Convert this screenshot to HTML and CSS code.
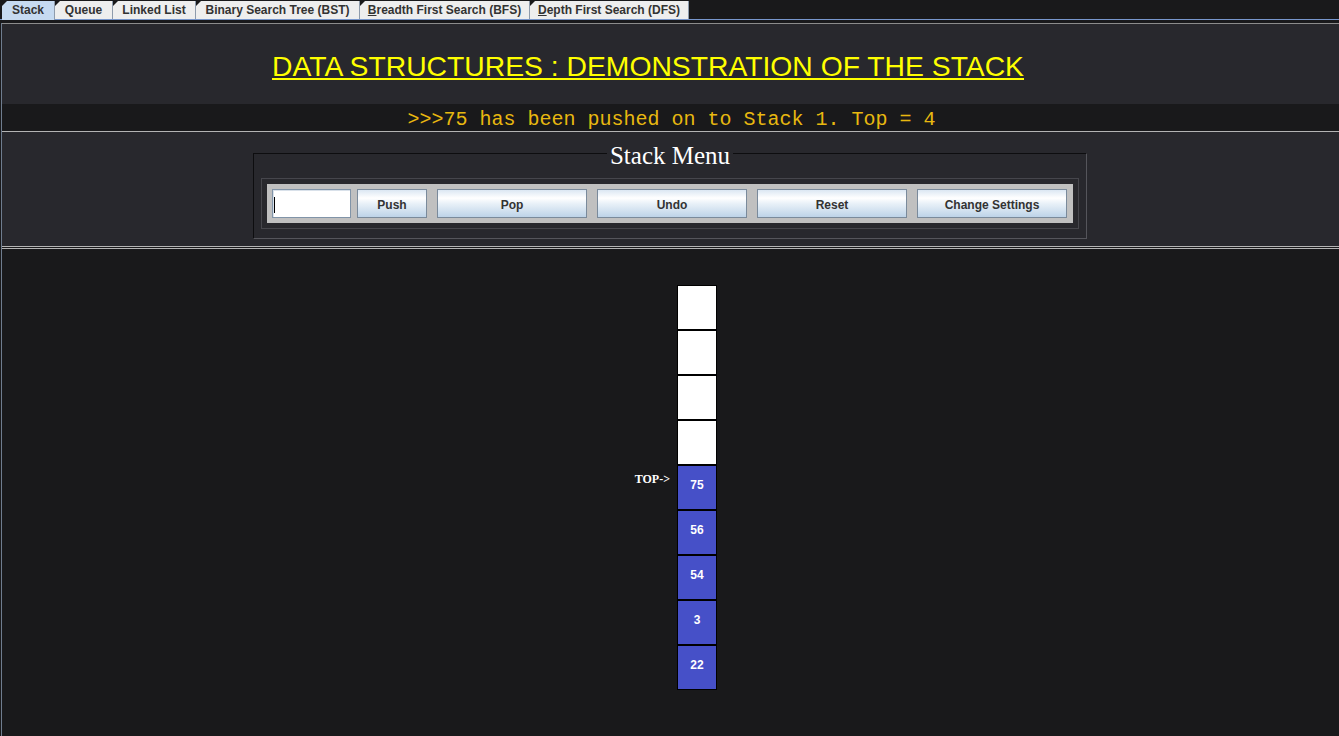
FILE: index.html
```html
<!DOCTYPE html>
<html>
<head>
<meta charset="utf-8">
<link rel="stylesheet" href="styles.css">
</head>
<body>
<div class="tabbar">
  <div class="tab t-stack selected">Stack</div>
  <div class="tab t-queue">Queue</div>
  <div class="tab t-list">Linked List</div>
  <div class="tab t-bst">Binary Search Tree (BST)</div>
  <div class="tab t-bfs"><u>B</u>readth First Search (BFS)</div>
  <div class="tab t-dfs"><u>D</u>epth First Search (DFS)</div>
</div>
<div class="content">
  <div class="header">
    <h1 class="title">DATA STRUCTURES : DEMONSTRATION OF THE STACK</h1>
  </div>
  <div class="status">&gt;&gt;&gt;75 has been pushed on to Stack 1. Top = 4</div>
  <div class="menu">
    <fieldset class="menubox">
      <legend class="menutitle">Stack Menu</legend>
      <div class="inner">
        <div class="controls">
          <div class="field"><span class="caret"></span></div>
          <div class="btn push">Push</div>
          <div class="btn wide">Pop</div>
          <div class="btn wide">Undo</div>
          <div class="btn wide">Reset</div>
          <div class="btn wide">Change Settings</div>
        </div>
      </div>
    </fieldset>
  </div>
  <div class="canvas">
    <div class="stack">
      <div class="row"><div class="label"></div><div class="cell"></div></div>
      <div class="row"><div class="label"></div><div class="cell"></div></div>
      <div class="row"><div class="label"></div><div class="cell"></div></div>
      <div class="row"><div class="label"></div><div class="cell"></div></div>
      <div class="row"><div class="label">TOP-&gt;</div><div class="cell filled">75</div></div>
      <div class="row"><div class="label"></div><div class="cell filled">56</div></div>
      <div class="row"><div class="label"></div><div class="cell filled">54</div></div>
      <div class="row"><div class="label"></div><div class="cell filled">3</div></div>
      <div class="row"><div class="label"></div><div class="cell filled">22</div></div>
    </div>
  </div>
</div>
</body>
</html>
```
FILE: styles.css
```css
html, body {
  margin: 0;
  padding: 0;
  background: #19191b;
  height: 100%;
  overflow: hidden;
}
body {
  font-family: "Liberation Sans", Arial, sans-serif;
}
.tabbar {
  display: flex;
  height: 19px;
  padding-left: 2px;
  border-bottom: 1px solid #7796cc;
  box-sizing: content-box;
}
.tab {
  margin-top: 1px;
  height: 18px;
  line-height: 18px;
  box-sizing: border-box;
  border-right: 1px solid #8e9bac;
  background: #eeeeee;
  color: #333333;
  font-size: 12px;
  font-weight: bold;
  text-align: center;
  white-space: nowrap;
  flex: none;
  clip-path: polygon(5px 0, 100% 0, 100% 100%, 0 100%, 0 5px);
}
.t-stack { width: 53px; }
.t-queue { width: 58px; }
.t-list { width: 83px; }
.t-bst { width: 164px; }
.t-bfs { width: 170px; }
.t-dfs { width: 159px; }
.tab.selected {
  background: #c6daf1;
  height: 19px;
  margin-bottom: -1px;
  position: relative;
  z-index: 1;
}
.content {
  margin-top: 3px;
  margin-left: 1px;
  border-left: 1px solid #6f7d8f;
}
.header {
  background: #28282d;
  border-top: 1px solid #8c8c8c;
  height: 80px;
  box-sizing: content-box;
}
.title {
  margin: 0;
  padding-top: 26px;
  padding-right: 45px;
  text-align: center;
  font-family: "Liberation Sans", Arial, sans-serif;
  font-weight: normal;
  font-size: 28.3px;
  line-height: 32px;
  color: #ffff00;
  text-decoration: underline;
  text-decoration-thickness: 2px;
  text-underline-offset: 2px;
}
.status {
  height: 27px;
  line-height: 31px;
  text-align: center;
  font-family: "Liberation Mono", "Courier New", monospace;
  font-size: 20px;
  color: #e8b810;
  padding-left: 2px;
}
.menu {
  background: #28282d;
  border-top: 1px solid #b4b4b4;
  border-bottom: 1px solid #b4b4b4;
  height: 114px;
  box-sizing: content-box;
  display: flex;
  justify-content: center;
  padding-right: 1px;
}
.menubox {
  margin: 5px 0 0 0;
  width: 834px;
  height: 102px;
  box-sizing: border-box;
  padding: 0 7px 0 7px;
  border-top: 1px solid #0d0d0f;
  border-left: 1px solid #0d0d0f;
  border-right: 1px solid #55555b;
  border-bottom: 1px solid #55555b;
  min-width: 0;
}
.menutitle {
  margin: 0 auto;
  padding: 6px 3px 0 3px;
  font-family: "Liberation Serif", "Times New Roman", serif;
  font-size: 25px;
  line-height: 26px;
  color: #ffffff;
}
.inner {
  margin-top: 9px;
  border: 1px solid #46464c;
  padding: 5px;
}
.controls {
  background: #c0c0c0;
  display: flex;
  padding: 5px;
}
.field {
  width: 79px;
  height: 29px;
  box-sizing: border-box;
  background: #ffffff;
  border: 1px solid #8194a8;
  box-shadow: inset 1px 1px 0 #d9e1ea;
  margin-right: 6px;
  padding: 7px 0 0 1px;
}
.caret {
  display: block;
  width: 1px;
  height: 16px;
  background: #000000;
}
.btn {
  height: 29px;
  box-sizing: border-box;
  border: 1px solid #7a8a9b;
  background: linear-gradient(#dbe7f3 0%, #ffffff 30%, #e9f1f8 50%, #bdd3e8 100%);
  color: #333333;
  font-size: 12px;
  font-weight: bold;
  line-height: 30px;
  text-align: center;
  white-space: nowrap;
}
.push {
  width: 70px;
}
.wide {
  width: 150px;
  margin-left: 10px;
}
.canvas {
  border-top: 1px solid #b4b4b4;
  margin-top: 1px;
  height: 500px;
}
.stack {
  padding-top: 36px;
  padding-left: 628px;
}
.row {
  display: flex;
  gap: 7px;
}
.label {
  width: 40px;
  text-align: right;
  padding-top: 7px;
  font-family: "Liberation Serif", "Times New Roman", serif;
  font-weight: bold;
  font-size: 12px;
  line-height: 14px;
  color: #ffffff;
}
.cell {
  width: 40px;
  height: 45px;
  box-sizing: border-box;
  border: 1px solid #000000;
  background: #ffffff;
  color: #ffffff;
  font-size: 12px;
  font-weight: bold;
  text-align: center;
  line-height: 14px;
  padding-top: 12px;
}
.cell.filled {
  background: #4650c8;
}
```
